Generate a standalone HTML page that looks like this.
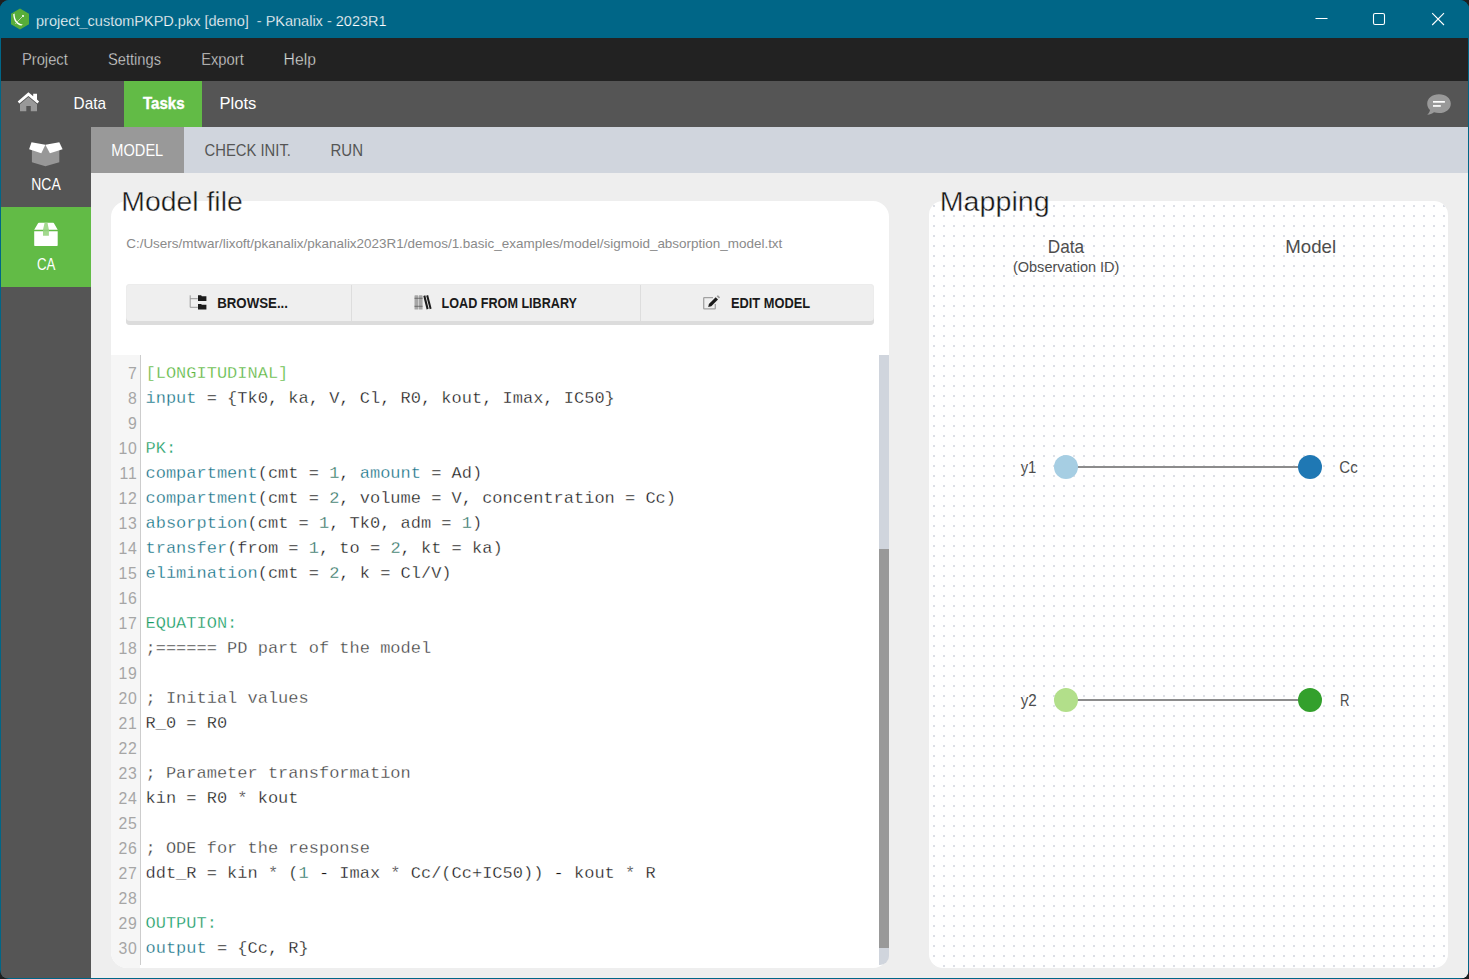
<!DOCTYPE html>
<html>
<head>
<meta charset="utf-8">
<title>PKanalix</title>
<style>
*{box-sizing:border-box;margin:0;padding:0}
html,body{width:1469px;height:979px;overflow:hidden;background:#1f1f1f;font-family:"Liberation Sans",sans-serif}
.abs{position:absolute}
.t{position:absolute;white-space:pre;line-height:1;transform-origin:0 0}
#win{position:absolute;left:0;top:0;width:1469px;height:979px;background:#006687;border-radius:9px 9px 9px 9px;overflow:hidden}
#titlebar{position:absolute;left:0;top:0;width:1469px;height:38px;background:#006687}
#menubar{position:absolute;left:1px;top:38px;width:1467px;height:43px;background:#222222}
#tabbar{position:absolute;left:1px;top:81px;width:1467px;height:46px;background:#555555}
#sidebar{position:absolute;left:1px;top:127px;width:90px;height:851px;background:#555555}
#subbar{position:absolute;left:91px;top:127px;width:1377px;height:46px;background:#d0d5dd}
#content{position:absolute;left:91px;top:173px;width:1377px;height:805px;background:#eeeeee}
#tasks{position:absolute;left:124px;top:81px;width:78px;height:46px;background:#62bb46}
#ca{position:absolute;left:1px;top:207px;width:90px;height:80px;background:#62bb46}
#modeltab{position:absolute;left:91px;top:127px;width:93px;height:46px;background:#999999}
#mpanel{position:absolute;left:111px;top:201px;width:778px;height:767px;background:#ffffff;border-radius:16px;overflow:hidden}
#map{position:absolute;left:929px;top:201px;width:519px;height:767px;background-color:#ffffff;border-radius:14px;overflow:hidden}
.menu{-webkit-text-stroke:0.35px #222222;color:#dcdcdc;font-size:16.5px}
.tab{color:#ffffff;font-size:17.5px}
.sub{font-size:16.5px;color:#555}
.btn{font-weight:bold;font-size:14px;color:#1a1a1a}
#btnbar{position:absolute;left:126px;top:284px;width:748px;height:41px;background:#efefef;border-radius:4px;box-shadow:inset 0 -4px 0 #dcdcdc, inset 0 0 0 1px #ececec}
.div{position:absolute;top:285px;width:1px;height:36px;background:#dddddd}
#gutter{position:absolute;left:111px;top:355px;width:29px;height:613px;background:#f6f6f6;border-radius:0 0 0 16px}
#gline{position:absolute;left:140px;top:355px;width:1px;height:610px;background:#cdcdcd}
#code{position:absolute;left:145.5px;top:361px;-webkit-text-stroke:0.3px #ffffff;font-family:"Liberation Mono",monospace;font-size:17px;line-height:25px;color:#161616;white-space:pre}
#nums{position:absolute;left:111px;top:361px;width:26.8px;text-align:right;font-size:15.8px;letter-spacing:0.9px;line-height:25px;color:#a6a6a6;white-space:pre}
.sec{color:#58b53c}.blk{color:#159a62}.kw{color:#0f6e82}.num{color:#2a6f5e}.cm{color:#3c3c3c}
#strack{position:absolute;left:879px;top:355px;width:10px;height:610px;background:#d0d5dd;border-radius:0 0 9px 0}
#sthumb{position:absolute;left:879px;top:549px;width:10px;height:399px;background:#999999}
.lab{font-size:17px;color:#4d4d4d}
</style>
</head>
<body>
<div id="win">
<div id="titlebar"></div>
<div id="menubar"></div>
<div id="tabbar"></div>
<div id="sidebar"></div>
<div id="subbar"></div>
<div id="content"></div>
<div id="tasks"></div>
<div id="ca"></div>
<div id="modeltab"></div>

<!-- title -->
<svg class="abs" style="left:10px;top:8px" width="20" height="22" viewBox="0 0 20 22"><path d="M10 0.6 L19 5.8 L19 16.2 L10 21.4 L1 16.2 L1 5.8 Z" fill="#57ad3a"/><path d="M3.2 6.3 L4.6 5.6 C4.6 11 6.5 15.5 12.8 16.6 L11.5 17.6 C6 17 3.5 12 3.2 6.3Z" fill="#fff"/><circle cx="13" cy="8" r="1.1" fill="#fff"/><path d="M12.5 8.5 L5.2 15.8" stroke="#dff0d8" stroke-width="0.7" fill="none"/></svg>
<div class="t" id="title" style="left:35px;top:14px;font-size:14.4px;transform:translateX(1.00px) scaleX(1.0075);color:#ffffff;-webkit-text-stroke:0.25px #006687">project_customPKPD.pkx [demo]  - PKanalix - 2023R1</div>
<svg class="abs" style="left:1310px;top:9px" width="140" height="20" viewBox="0 0 140 20"><g stroke="#ffffff" stroke-width="1.1" fill="none"><path d="M5.5 9.5 H17.5"/><rect x="63.5" y="4.5" width="11" height="11" rx="1.6"/><path d="M122.2 4.2 L134 16 M134 4.2 L122.2 16"/></g></svg>

<!-- menu -->
<div class="t menu" id="m1" style="left:21px;top:51px;font-size:16.5px;transform:translateX(0.89px) scaleX(0.8949);">Project</div>
<div class="t menu" id="m2" style="left:107px;top:51px;font-size:16.5px;transform:translateX(0.95px) scaleX(0.8898);">Settings</div>
<div class="t menu" id="m3" style="left:201px;top:51px;font-size:16.5px;transform:translateX(0.15px) scaleX(0.8935);">Export</div>
<div class="t menu" id="m4" style="left:283px;top:51px;font-size:16.5px;transform:translateX(0.60px) scaleX(0.9512);">Help</div>

<!-- tabs -->
<svg class="abs" style="left:17px;top:91px" width="24" height="22" viewBox="0 0 24 22"><path d="M11.400 6 L3 13.200 V20.200 H9.300 V15.100 H13.800 V20.200 H20 V13.200 Z" fill="#999999"/><path d="M11.400 1.200 L0.700 10.400 L2.400 12.500 L11.400 4.900 L20.400 12.500 L22.100 10.400 L20 8.600 V2.800 H16.200 V5.300 Z" fill="#ffffff"/></svg>
<div class="t tab" id="t1" style="left:73px;top:95px;font-size:16.2px;transform:translateX(0.59px) scaleX(0.9473);">Data</div>
<div class="t tab" id="t2" style="left:143px;top:95px;font-size:16.2px;transform:translateX(0.04px) scaleX(0.9292);font-weight:bold;-webkit-text-stroke:0.4px #ffffff">Tasks</div>
<div class="t tab" id="t3" style="left:219px;top:95px;font-size:16.2px;transform:translateX(0.55px) scaleX(1.0219);">Plots</div>
<svg class="abs" style="left:1424px;top:92px" width="30" height="26" viewBox="0 0 30 26"><path d="M15 2.300 C21.800 2.300 26.800 6.400 26.800 11.700 C26.800 17 21.800 21.100 15 21.100 C13.200 21.100 11.500 20.800 10 20.300 C8.200 21.800 5.800 22.600 3.200 22.700 C4.800 21.500 5.800 19.800 6 18 C4.300 16.300 3.200 14.100 3.200 11.700 C3.200 6.400 8.200 2.300 15 2.300Z" fill="#999999"/><rect x="9" y="9" width="11.900" height="1.700" fill="#fff"/><rect x="9" y="13.100" width="7.800" height="1.700" fill="#fff"/></svg>

<!-- sidebar -->
<svg class="abs" style="left:28px;top:141px" width="36" height="27" viewBox="0 0 36 27"><path d="M3.900 8.500 L17.400 4 L31.300 8.500 V21.200 L17.400 25.300 L3.900 21.200 Z" fill="#979797"/><path d="M3.500 1.200 L17.400 3.800 L13.300 12.200 L1.100 8.300 Z" fill="#ffffff"/><path d="M31.300 1.200 L17.400 3.800 L21.900 12.200 L34.600 8.300 Z" fill="#ffffff"/></svg>
<div class="t tab" id="s1" style="left:31px;top:176px;font-size:17px;transform:translateX(0.29px) scaleX(0.8195);">NCA</div>
<svg class="abs" style="left:33px;top:222px" width="26" height="25" viewBox="0 0 26 25"><path d="M5.900 0.800 H20.200 Q20.800 0.800 21.100 1.400 L24.700 7.700 H1.200 L4.900 1.400 Q5.300 0.800 5.900 0.800 Z" fill="#ffffff"/><path d="M1.200 9.200 H24.700 V22.900 Q24.700 24.100 23.500 24.100 H2.400 Q1.200 24.100 1.200 22.900 Z" fill="#ffffff"/><path d="M11.600 0.800 H14.500 L15.900 7.700 V13.700 H10 V7.700 Z" fill="#a3d98f"/><rect x="10" y="7.700" width="5.900" height="1.500" fill="#8fd07a"/></svg>
<div class="t tab" id="s2" style="left:37px;top:256px;font-size:17px;transform:translateX(0.02px) scaleX(0.7799);">CA</div>

<!-- subtabs -->
<div class="t sub" id="u1" style="left:111px;top:142px;font-size:17.2px;transform:translateX(0.36px) scaleX(0.8487);color:#ffffff">MODEL</div>
<div class="t sub" id="u2" style="left:204px;top:142px;font-size:17.2px;transform:translateX(0.52px) scaleX(0.8615);">CHECK INIT.</div>
<div class="t sub" id="u3" style="left:330px;top:142px;font-size:17.2px;transform:translateX(0.54px) scaleX(0.8718);">RUN</div>

<!-- model panel -->
<div id="mpanel"></div>
<div class="t" id="h1" style="left:121px;top:189px;font-size:27px;transform:translateX(0.27px) scaleX(1.0514);color:#141414;-webkit-text-stroke:0.4px #f8f8f8">Model file</div>
<div class="t" id="path" style="left:126px;top:237px;font-size:13.2px;transform:translateX(0.20px) scaleX(1.0207);color:#8a8a8a">C:/Users/mtwar/lixoft/pkanalix/pkanalix2023R1/demos/1.basic_examples/model/sigmoid_absorption_model.txt</div>
<div id="btnbar"></div>
<div class="div" style="left:351px"></div>
<div class="div" style="left:640px"></div>
<div class="t btn" id="b1" style="left:217px;top:296px;font-size:14.5px;transform:translateX(0.19px) scaleX(0.9152);">BROWSE...</div>
<div class="t btn" id="b2" style="left:441px;top:296px;font-size:14.5px;transform:translateX(0.61px) scaleX(0.8691);">LOAD FROM LIBRARY</div>
<div class="t btn" id="b3" style="left:730px;top:296px;font-size:14.5px;transform:translateX(0.97px) scaleX(0.8847);">EDIT MODEL</div>
<svg class="abs" style="left:189px;top:294px" width="19" height="17" viewBox="0 0 19 17"><path d="M1.2 1.300 V13.300 H8.800 M1.200 4.700 H8.800" stroke="#9a9a9a" stroke-width="1" fill="none"/><path d="M9 1.300 H12.200 L12.800 2.200 H17.400 V6.900 H9 Z" fill="#1c1c1c"/><path d="M9 9.900 H12.200 L12.800 10.800 H17.400 V15.500 H9 Z" fill="#1c1c1c"/></svg>
<svg class="abs" style="left:414px;top:294px" width="19" height="17" viewBox="0 0 19 17"><rect x="0.500" y="1.300" width="3.700" height="14.200" rx="0.600" fill="#a6a6a6"/><rect x="4.700" y="1.300" width="3.900" height="14.200" rx="0.600" fill="#a6a6a6"/><path d="M0.500 4.300 H8.600 M0.500 12.300 H8.600" stroke="#555" stroke-width="0.700"/><path d="M9.300 1.900 L11.300 1.300 L14.600 14.800 L12.600 15.400 Z" fill="#1c1c1c"/><path d="M12.200 1.700 L14.100 1.100 L17.600 14.600 L15.700 15.200 Z" fill="#1c1c1c"/></svg>
<svg class="abs" style="left:702px;top:294px" width="20" height="17" viewBox="0 0 20 17"><path d="M11 3.700 H2.300 Q1.700 3.700 1.700 4.300 V14.300 Q1.700 14.900 2.300 14.900 H12.700 Q13.300 14.900 13.300 14.300 V10" stroke="#a2a2a2" stroke-width="1.300" fill="none"/><path d="M13.700 3.200 L16 5.500 L9.300 12.200 L6.200 12.900 L6.900 9.900 Z" fill="#1c1c1c"/><path d="M14.600 2.300 L15.500 1.400 Q15.900 1 16.300 1.400 L17.800 2.900 Q18.200 3.300 17.800 3.700 L16.900 4.600 Z" fill="#9a9a9a"/></svg>

<div id="gutter"></div>
<div id="gline"></div>
<div id="nums">7
8
9
10
11
12
13
14
15
16
17
18
19
20
21
22
23
24
25
26
27
28
29
30</div>
<div id="code"><span class="sec">[LONGITUDINAL]</span>
<span class="kw">input</span> = {Tk0, ka, V, Cl, R0, kout, Imax, IC50}

<span class="blk">PK:</span>
<span class="kw">compartment</span>(cmt = <span class="num">1</span>, <span class="kw">amount</span> = Ad)
<span class="kw">compartment</span>(cmt = <span class="num">2</span>, volume = V, concentration = Cc)
<span class="kw">absorption</span>(cmt = <span class="num">1</span>, Tk0, adm = <span class="num">1</span>)
<span class="kw">transfer</span>(from = <span class="num">1</span>, to = <span class="num">2</span>, kt = ka)
<span class="kw">elimination</span>(cmt = <span class="num">2</span>, k = Cl/V)

<span class="blk">EQUATION:</span>
<span class="cm">;====== PD part of the model</span>

<span class="cm">; Initial values</span>
R_0 = R0

<span class="cm">; Parameter transformation</span>
kin = R0 * kout

<span class="cm">; ODE for the response</span>
ddt_R = kin * (<span class="num">1</span> - Imax * Cc/(Cc+IC50)) - kout * R

<span class="blk">OUTPUT:</span>
<span class="kw">output</span> = {Cc, R}</div>
<div id="strack"></div>
<div id="sthumb"></div>

<!-- mapping -->
<div id="map"><svg width="519" height="767" style="position:absolute;left:0;top:0"><defs><pattern id="dots" x="4" y="4" width="10" height="10" patternUnits="userSpaceOnUse"><rect x="0" y="0" width="2" height="2" fill="#dcdfe6"/></pattern></defs><rect width="519" height="767" fill="url(#dots)"/></svg></div>
<div class="t" id="h2" style="left:939px;top:189px;font-size:27px;transform:translateX(0.68px) scaleX(1.0619);color:#141414;-webkit-text-stroke:0.4px #f8f8f8">Mapping</div>
<div class="t lab" id="l1" style="left:1047px;top:239px;font-size:17.7px;transform:translateX(0.74px) scaleX(0.9714);">Data</div>
<div class="t lab" id="l2" style="left:1012px;top:260px;font-size:14.5px;transform:translateX(0.91px) scaleX(1.0014);">(Observation ID)</div>
<div class="t lab" id="l3" style="left:1285px;top:239px;font-size:17.7px;transform:translateX(0.21px) scaleX(1.0548);">Model</div>
<svg class="abs" style="left:1000px;top:440px" width="400" height="300" viewBox="0 0 400 300"><path d="M66 27 H310" stroke="#8c8c8c" stroke-width="2"/><circle cx="66" cy="27" r="12" fill="#a6cee3"/><circle cx="310" cy="27" r="12" fill="#1f78b4"/><path d="M66 260 H310" stroke="#8c8c8c" stroke-width="2"/><circle cx="66" cy="260" r="12" fill="#b2df8a"/><circle cx="310" cy="260" r="12" fill="#33a02c"/></svg>
<div class="t lab" id="y1" style="left:1020px;top:460px;font-size:16.8px;transform:translateX(0.63px) scaleX(0.8836);">y1</div>
<div class="t lab" id="y2" style="left:1020px;top:693px;font-size:16.8px;transform:translateX(0.72px) scaleX(0.9057);">y2</div>
<div class="t lab" id="c1" style="left:1339px;top:460px;font-size:16.8px;transform:translateX(0.34px) scaleX(0.8952);">Cc</div>
<div class="t lab" id="c2" style="left:1339px;top:693px;font-size:16.8px;transform:translateX(0.98px) scaleX(0.7828);">R</div>
</div>
</body>
</html>
